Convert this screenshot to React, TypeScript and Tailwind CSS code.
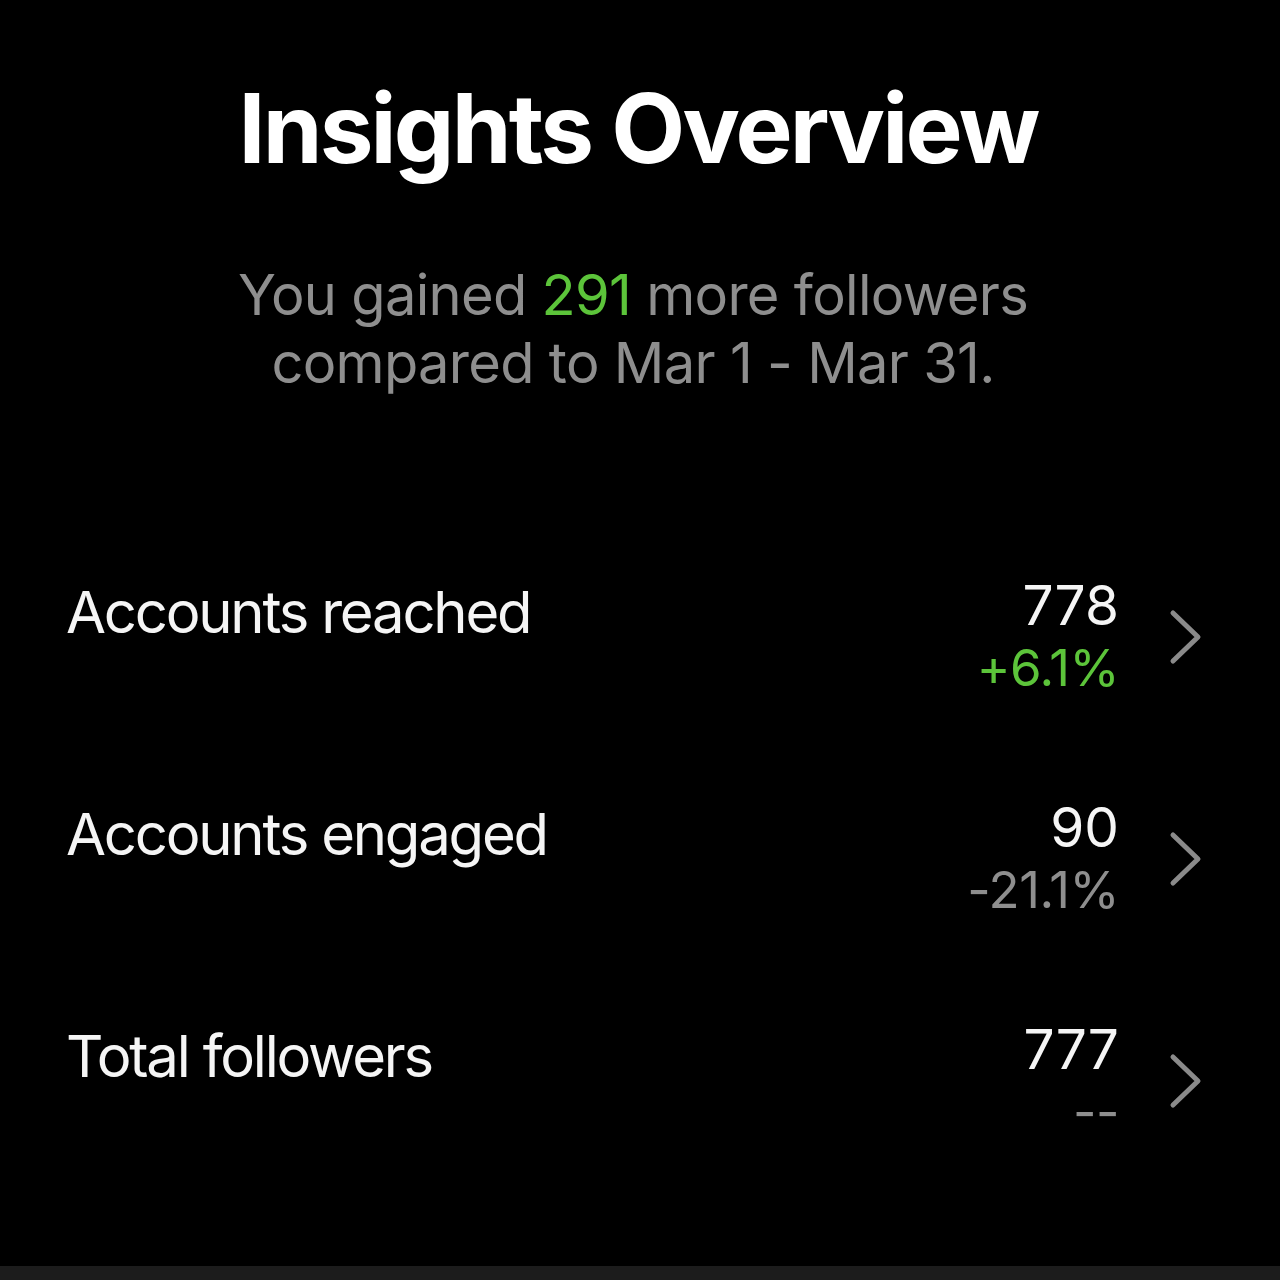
import React from 'react';

interface Metric {
  label: string;
  value: string;
  change: string;
  trend: 'up' | 'down' | 'none';
}

const metrics: Metric[] = [
  { label: 'Accounts reached', value: '778', change: '+6.1%', trend: 'up' },
  { label: 'Accounts engaged', value: '90', change: '-21.1%', trend: 'down' },
  { label: 'Total followers', value: '777', change: '--', trend: 'none' },
];

const Chevron: React.FC = () => (
  <svg width="34" height="58" viewBox="0 0 34 58" fill="none" className="mt-[35px] ml-[49px] shrink-0">
    <polyline
      points="5,5 30,29 5,53"
      stroke="#8a8a8a"
      strokeWidth="5"
      strokeLinecap="round"
      strokeLinejoin="round"
    />
  </svg>
);

const MetricRow: React.FC<{ metric: Metric }> = ({ metric }) => {
  const changeColor = metric.trend === 'up' ? 'text-[#5cc43a]' : 'text-[#8e8e8e]';
  return (
    <div className="flex items-start">
      <div className="flex-1 mt-[7px] text-[58px] leading-[64px] tracking-[-2.2px] text-[#f5f5f5]">{metric.label}</div>
      <div className="flex flex-col items-end">
        <div className="text-[55px] leading-[64px] text-[#f5f5f5]">{metric.value}</div>
        <div className={`text-[51px] leading-[62px] tracking-[-0.5px] ${changeColor}`}>{metric.change}</div>
      </div>
      <Chevron />
    </div>
  );
};

export default function App() {
  return (
    <div className="h-[1280px] w-full bg-black flex flex-col font-['Inter','Noto_Sans',sans-serif]">
      <main className="flex-1 flex flex-col">
        <h1 className="mt-[80px] pr-[4px] text-center text-[96px] leading-[96px] font-bold text-white tracking-[-2.8px]">
          Insights Overview
        </h1>
        <p className="mt-[85px] pr-[14px] text-center text-[56px] leading-[68px] tracking-[-0.7px] text-[#8e8e8e]">
          You gained <span className="text-[#5cc43a]">291</span> more followers
          <br />
          compared to Mar 1 - Mar 31.
        </p>
        <div className="mt-[176px] pl-[66px] pr-[78px] flex flex-col gap-[96px]">
          {metrics.map((m) => (
            <MetricRow key={m.label} metric={m} />
          ))}
        </div>
      </main>
      <div className="h-[14px] bg-[#1c1c1c]" />
    </div>
  );
}
